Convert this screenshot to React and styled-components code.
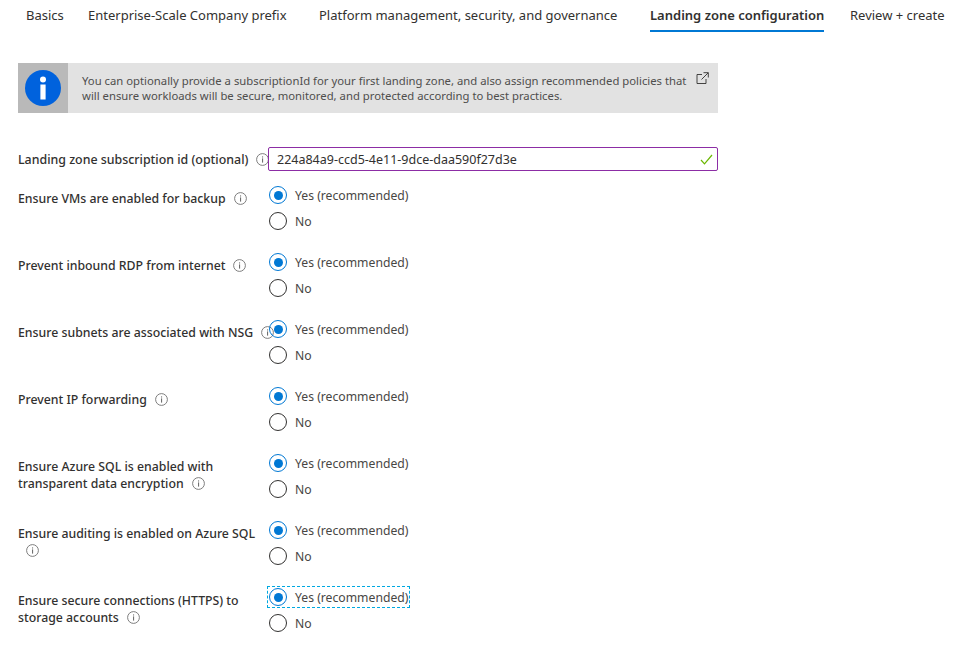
import React from "react";
import styled, { createGlobalStyle } from "styled-components";

const GlobalStyle = createGlobalStyle`
  html, body {
    margin: 0;
    background: #fff;
  }
  body {
    font-family: "Noto Sans", "Open Sans", sans-serif;
    font-size: 12.5px;
    color: #323130;
  }
`;

const policies = [
  { label: "Ensure VMs are enabled for backup" },
  { label: "Prevent inbound RDP from internet" },
  { label: "Ensure subnets are associated with NSG" },
  { label: "Prevent IP forwarding" },
  { label: "Ensure Azure SQL is enabled with transparent data encryption" },
  { label: "Ensure auditing is enabled on Azure SQL" },
  { label: "Ensure secure connections (HTTPS) to storage accounts", focused: true },
];

const tabs = [
  { name: "Basics", width: 62 },
  { name: "Enterprise-Scale Company prefix", width: 231 },
  { name: "Platform management, security, and governance", width: 331 },
  { name: "Landing zone configuration", width: 200, active: true },
  { name: "Review + create", width: 119 },
];

const InfoIcon = () => (
  <InfoSvg viewBox="0 0 13 13" aria-hidden="true">
    <circle cx="6.5" cy="6.5" r="5.9" fill="none" stroke="#6f6f6f" strokeWidth="0.9" />
    <rect x="6" y="5.4" width="1.1" height="4.2" fill="#6f6f6f" />
    <rect x="6" y="3.4" width="1.1" height="1.1" fill="#6f6f6f" />
  </InfoSvg>
);

const Radio = ({ label, checked, focused }) => (
  <RadioRow $focused={focused}>
    <RadioCircle $checked={checked} />
    {label}
  </RadioRow>
);

const App = () => {
  return (
    <Page>
      <GlobalStyle />
      <TabBar>
        {tabs.map((tab) => (
          <TabSlot key={tab.name} $width={tab.width}>
            <Tab $active={tab.active}>{tab.name}</Tab>
          </TabSlot>
        ))}
      </TabBar>

      <Banner>
        <BannerIcon>
          <svg width="36" height="36" viewBox="0 0 36 36" aria-hidden="true">
            <circle cx="18" cy="18" r="18" fill="#0062dd" />
            <circle cx="18" cy="9.5" r="3" fill="#fff" />
            <rect x="15.4" y="14.5" width="5.2" height="15" fill="#fff" />
          </svg>
        </BannerIcon>
        <BannerText>
          You can optionally provide a subscriptionId for your first landing zone, and also assign
          recommended policies that will ensure workloads will be secure, monitored, and protected
          according to best practices.
        </BannerText>
        <ExternalSvg viewBox="0 0 13 13" aria-hidden="true">
          <path
            d="M6 2.5H1v9h9V7M7.5 0.7h4.8v4.8M12.2 0.8L5.5 7.5"
            fill="none"
            stroke="#323130"
            strokeWidth="0.9"
          />
        </ExternalSvg>
      </Banner>

      <SubscriptionRow>
        <SubscriptionLabel>
          Landing zone subscription id (optional)
          <InfoIcon />
        </SubscriptionLabel>
        <InputWrap>
          <SubscriptionInput readOnly value="224a84a9-ccd5-4e11-9dce-daa590f27d3e" />
          <CheckSvg viewBox="0 0 13 11" aria-hidden="true">
            <path d="M1 6l3.5 3.8L12 1" fill="none" stroke="#6bb700" strokeWidth="1.2" />
          </CheckSvg>
        </InputWrap>
      </SubscriptionRow>

      {policies.map((policy) => (
        <PolicyRow key={policy.label}>
          <PolicyLabel>
            {policy.label}
            <InfoIcon />
          </PolicyLabel>
          <RadioGroup>
            <Radio label="Yes (recommended)" checked focused={policy.focused} />
            <Radio label="No" />
          </RadioGroup>
        </PolicyRow>
      ))}
    </Page>
  );
};

const Page = styled.div`
  width: 969px;
  height: 658px;
  overflow: hidden;
`;

const TabBar = styled.div`
  display: flex;
  height: 32px;
  padding-left: 26px;
`;

const TabSlot = styled.div`
  width: ${(p) => p.$width}px;
  flex: none;
`;

const Tab = styled.div`
  display: inline-block;
  height: 32px;
  box-sizing: border-box;
  padding-top: 6px;
  font-size: 13px;
  line-height: 18px;
  white-space: nowrap;
  font-weight: ${(p) => (p.$active ? 600 : 400)};
  border-bottom: 2px solid ${(p) => (p.$active ? "#0078d4" : "transparent")};
`;

const Banner = styled.div`
  display: flex;
  width: 700px;
  height: 50px;
  margin: 31px 0 0 18px;
  background: #e2e2e2;
`;

const BannerIcon = styled.div`
  display: flex;
  align-items: center;
  justify-content: center;
  flex: none;
  width: 50px;
  background: #b9b9b9;
`;

const BannerText = styled.div`
  width: 606px;
  flex: none;
  margin: 0 8px 0 14px;
  padding-top: 10px;
  font-size: 11.3px;
  line-height: 15px;
  color: #4f4e4d;
`;

const ExternalSvg = styled.svg`
  flex: none;
  width: 13px;
  height: 13px;
  margin-top: 9px;
`;

const SubscriptionRow = styled.div`
  display: flex;
  align-items: center;
  margin: 34px 0 14px 18px;
`;

const SubscriptionLabel = styled.div`
  width: 250px;
  flex: none;
  font-size: 12.4px;
  font-weight: 500;
  white-space: nowrap;
`;

const InputWrap = styled.div`
  position: relative;
  width: 450px;
  height: 24px;
`;

const SubscriptionInput = styled.input`
  width: 100%;
  height: 100%;
  box-sizing: border-box;
  padding: 0 8px;
  border: 1px solid #8c2da5;
  border-radius: 2px;
  outline: none;
  font: inherit;
  color: #323130;
`;

const CheckSvg = styled.svg`
  position: absolute;
  top: 7px;
  right: 5px;
  width: 13px;
  height: 11px;
`;

const PolicyRow = styled.div`
  display: flex;
  margin: 0 0 21px 18px;
`;

const PolicyLabel = styled.div`
  width: 258px;
  margin-right: -8px;
  flex: none;
  padding-top: 5px;
  font-size: 12.3px;
  font-weight: 500;
  line-height: 17px;
`;

const InfoSvg = styled.svg`
  display: inline-block;
  width: 13px;
  height: 13px;
  margin-left: 8px;
  vertical-align: -2px;
`;

const RadioGroup = styled.div`
  display: flex;
  flex-direction: column;
  gap: 6px;
`;

const RadioRow = styled.div`
  display: flex;
  align-items: center;
  gap: 8px;
  height: 20px;
  box-sizing: border-box;
  padding-left: 1px;
  padding-right: 1px;
  font-size: 12.2px;
  color: #484644;
  white-space: nowrap;
  outline: ${(p) => (p.$focused ? "1px dashed #00a8e0" : "none")};
`;

const RadioCircle = styled.span`
  box-sizing: border-box;
  position: relative;
  flex: none;
  width: 18px;
  height: 18px;
  border-radius: 50%;
  border: 1px solid ${(p) => (p.$checked ? "#0078d4" : "#323130")};

  &::after {
    content: "";
    display: ${(p) => (p.$checked ? "block" : "none")};
    position: absolute;
    inset: 3.5px;
    border-radius: 50%;
    background: #0078d4;
  }
`;

export default App;
